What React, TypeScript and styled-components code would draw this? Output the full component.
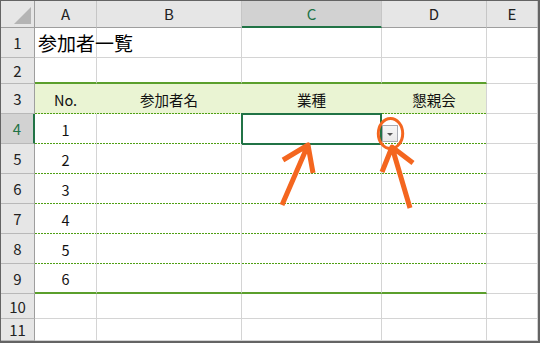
import React from 'react'
import styled, { createGlobalStyle, css } from 'styled-components'

const GlobalStyle = createGlobalStyle`
  html, body {
    margin: 0;
    padding: 0;
    background: #ffffff;
  }
  body {
    font-family: 'Noto Sans CJK JP', 'Noto Sans', sans-serif;
  }
`

const GRID = '#d4d4d4'
const TABLE_GREEN = '#5b9f2c'
const DOT_GREEN = '#4f9f14'
const SELECT_GREEN = '#217346'
const HEAD_FILL = '#eaf4d3'

const Sheet = styled.div`
  position: relative;
  box-sizing: border-box;
  width: 540px;
  height: 343px;
  border-style: solid;
  border-color: #646464;
  border-width: 1px 2px 2px 1px;
  overflow: hidden;
`

const Grid = styled.div`
  display: grid;
  grid-template-columns: 34px 62px 145px 140px 105px 51px;
  grid-template-rows: 27px 30px 26px 30px 30px 30px 30px 30px 30px 30px 25px 22px;
`

const Corner = styled.div`
  box-sizing: border-box;
  background: #e6e6e6;
  border-right: 1px solid #9e9e9e;
  border-bottom: 1px solid #9e9e9e;
  display: flex;
  align-items: flex-end;
  justify-content: flex-end;
  padding: 0 3px 3px 0;
`

const CornerMark = styled.div`
  width: 0;
  height: 0;
  border-left: 17px solid transparent;
  border-bottom: 17px solid #b4b4b4;
`

const ColHeader = styled.div<{ $selected?: boolean }>`
  box-sizing: border-box;
  display: flex;
  align-items: center;
  justify-content: center;
  padding-bottom: 1px;
  font-size: 15px;
  color: #222222;
  background: #e6e6e6;
  border-right: 1px solid #c6c6c6;
  border-bottom: 1px solid #9e9e9e;
  ${({ $selected }) =>
    $selected &&
    css`
      background: #d2d2d2;
      color: ${SELECT_GREEN};
      border-bottom: 2px solid ${SELECT_GREEN};
      padding-bottom: 0;
    `}
`

const RowHeader = styled.div<{ $selected?: boolean }>`
  box-sizing: border-box;
  display: flex;
  align-items: center;
  justify-content: center;
  font-size: 15px;
  color: #222222;
  background: #e6e6e6;
  border-right: 1px solid #9e9e9e;
  border-bottom: 1px solid #b8b8b8;
  ${({ $selected }) =>
    $selected &&
    css`
      background: #d2d2d2;
      color: ${SELECT_GREEN};
      border-right: 2px solid ${SELECT_GREEN};
    `}
`

type CellKind = 'plain' | 'above' | 'head' | 'body' | 'last'

// dotted row separator inside the table: 2px dash, 1px gap
const dotted = css`
  background-image: linear-gradient(90deg, ${DOT_GREEN} 2px, transparent 2px);
  background-size: 3px 1px;
  background-position: left bottom;
  background-repeat: repeat-x;
`

const Cell = styled.div<{ $kind?: CellKind; $edge?: boolean }>`
  box-sizing: border-box;
  position: relative;
  display: flex;
  align-items: center;
  justify-content: center;
  font-size: 14.5px;
  color: #111111;
  border-right: 1px solid ${GRID};
  border-bottom: 1px solid ${GRID};
  ${({ $kind }) =>
    $kind === 'above' &&
    css`
      border-bottom: 2px solid ${TABLE_GREEN};
    `}
  ${({ $kind, $edge }) =>
    $kind === 'head' &&
    css`
      background-color: ${HEAD_FILL};
      border-bottom: none;
      border-right-color: ${$edge ? GRID : HEAD_FILL};
      ${dotted};
    `}
  ${({ $kind }) =>
    $kind === 'body' &&
    css`
      border-bottom: none;
      ${dotted};
    `}
  ${({ $kind }) =>
    $kind === 'last' &&
    css`
      border-bottom: 2px solid ${TABLE_GREEN};
    `}
`

const Title = styled.span`
  position: absolute;
  left: 3px;
  top: 1px;
  white-space: nowrap;
  font-size: 19px;
  color: #000000;
`

const Selection = styled.div`
  position: absolute;
  top: -1px;
  left: -1px;
  right: -1px;
  bottom: -1px;
  border: 2px solid ${SELECT_GREEN};
  pointer-events: none;
`

const DropButton = styled.div`
  position: absolute;
  left: 140px;
  top: 11px;
  width: 16px;
  height: 17px;
  box-sizing: border-box;
  border: 1px solid #a8abb3;
  background: linear-gradient(#f7f7f7, #e9e9e9);
  display: flex;
  align-items: center;
  justify-content: center;
  z-index: 2;
`

const DropTriangle = styled.div`
  width: 0;
  height: 0;
  margin-top: 2px;
  border-left: 3px solid transparent;
  border-right: 3px solid transparent;
  border-top: 3px solid #555555;
`

const Marks = styled.svg`
  position: absolute;
  left: -1px;
  top: -1px;
  pointer-events: none;
  z-index: 3;
`

const columns = ['A', 'B', 'C', 'D', 'E']
const headLabels = ['No.', '参加者名', '業種', '懇親会']

const App: React.FC = () => {
  const bodyRows = [1, 2, 3, 4, 5, 6]

  return (
    <>
      <GlobalStyle />
      <Sheet>
        <Grid>
          <Corner>
            <CornerMark />
          </Corner>
          {columns.map((c) => (
            <ColHeader key={c} $selected={c === 'C'}>
              {c}
            </ColHeader>
          ))}

          <RowHeader>1</RowHeader>
          <Cell>
            <Title>参加者一覧</Title>
          </Cell>
          <Cell />
          <Cell />
          <Cell />
          <Cell />

          <RowHeader>2</RowHeader>
          <Cell $kind='above' />
          <Cell $kind='above' />
          <Cell $kind='above' />
          <Cell $kind='above' />
          <Cell />

          <RowHeader>3</RowHeader>
          {headLabels.map((label, i) => (
            <Cell key={label} $kind='head' $edge={i === headLabels.length - 1}>
              {label}
            </Cell>
          ))}
          <Cell />

          {bodyRows.map((n) => {
            const row = n + 3
            const kind: CellKind = n === bodyRows.length ? 'last' : 'body'
            return (
              <React.Fragment key={row}>
                <RowHeader $selected={row === 4}>{row}</RowHeader>
                <Cell $kind={kind}>{n}</Cell>
                <Cell $kind={kind} />
                <Cell $kind={kind}>
                  {row === 4 && (
                    <>
                      <Selection />
                      <DropButton>
                        <DropTriangle />
                      </DropButton>
                    </>
                  )}
                </Cell>
                <Cell $kind={kind} />
                <Cell />
              </React.Fragment>
            )
          })}

          {[10, 11].map((row) => (
            <React.Fragment key={row}>
              <RowHeader>{row}</RowHeader>
              <Cell />
              <Cell />
              <Cell />
              <Cell />
              <Cell />
            </React.Fragment>
          ))}
        </Grid>

        <Marks width='540' height='343' viewBox='0 0 540 343'>
          <g fill='none' stroke='#f4661f' strokeLinejoin='round'>
            <ellipse cx='390.5' cy='133.5' rx='12.2' ry='15' strokeWidth='3' />
            <path d='M282 205 L308 145 M283 160 L308 145 L313 173' strokeWidth='5' />
            <path d='M410 208 L392 147 M382 172 L392 147 L413 163' strokeWidth='5' />
          </g>
        </Marks>
      </Sheet>
    </>
  )
}

export default App
